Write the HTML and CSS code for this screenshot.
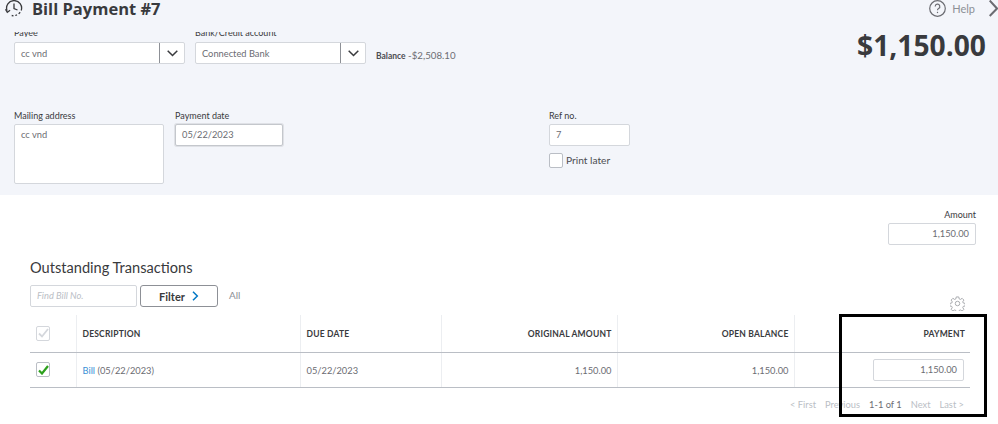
FILE: index.html
```html
<!DOCTYPE html>
<html lang="en">
<head>
<meta charset="utf-8">
<title>Bill Payment #7</title>
<link rel="stylesheet" href="styles.css">
</head>
<body>
<div class="page">
  <header class="panel">
    <div class="title-row">
      <svg class="history" width="18" height="17" viewBox="0 0 18 17" fill="none" stroke="#393a3d" stroke-width="1.300">
        <path d="M2.100 10.800A7.500 7.500 0 1 1 16.200 10.500"/>
        <path d="M15.200 12.200l-1.500 1.700M12 14.900l-1.700.6M8.500 15.800l-1.800-.3"/>
        <path d="M9 3.500V8.500l3.500 1.500"/>
        <path d="M.5 9.300l1.800 3 2.800-2"/>
      </svg>
      <h1 class="title">Bill Payment #7</h1>
      <div class="help">
        <svg width="17" height="17" viewBox="0 0 17 17" fill="none" stroke="#6b6c72" stroke-width="1.200">
          <circle cx="8.500" cy="8.500" r="7.800"/>
          <path d="M6.200 6.500a2.300 2.300 0 1 1 3.400 2c-.8.500-1.100.9-1.100 1.700"/>
          <path d="M8.500 11.800v1.300"/>
        </svg>
        <span>Help</span>
      </div>
      <svg class="close" width="9" height="17" viewBox="0 0 9 17" fill="none" stroke="#6b6c72" stroke-width="2">
        <path d="M0.700 0.500L8 8.500L0.700 16"/>
      </svg>
    </div>

    <div class="top-row">
      <div class="field payee">
        <label class="clipped">Payee</label>
        <div class="combo"><span>cc vnd</span><i class="combo-btn"><svg width="11" height="7" viewBox="0 0 11 7" fill="none" stroke="#393a3d" stroke-width="1.500"><path d="M.700.700l4.800 4.800L10.300.700"/></svg></i></div>
      </div>
      <div class="field bank">
        <label class="clipped">Bank/Credit account</label>
        <div class="combo"><span>Connected Bank</span><i class="combo-btn"><svg width="11" height="7" viewBox="0 0 11 7" fill="none" stroke="#393a3d" stroke-width="1.500"><path d="M.700.700l4.800 4.800L10.300.700"/></svg></i></div>
      </div>
      <div class="balance"><b>Balance</b> -$2,508.10</div>
      <div class="total">$1,150.00</div>
    </div>

    <div class="second-row">
      <div class="field mailing">
        <label>Mailing address</label>
        <div class="box area">cc vnd</div>
      </div>
      <div class="field date">
        <label>Payment date</label>
        <div class="box focus">05/22/2023</div>
      </div>
      <div class="field ref">
        <label>Ref no.</label>
        <div class="box">7</div>
        <div class="print"><span class="check"></span><span class="print-text">Print later</span></div>
      </div>
    </div>
  </header>

  <main class="content">
    <div class="amount">
      <label>Amount</label>
      <div class="box num">1,150.00</div>
    </div>
    <h2 class="section">Outstanding Transactions</h2>
    <div class="tools">
      <div class="box find">Find Bill No.</div>
      <button class="filter">Filter <svg width="7" height="10" viewBox="0 0 7 10" fill="none" stroke="#0077c5" stroke-width="1.500"><path d="M1 .8L5.300 5 1 9.200"/></svg></button>
      <span class="all">All</span>
      <svg class="gear" width="15" height="15" viewBox="0 0 24 24" fill="none" stroke="#a4a6ab" stroke-width="1.500">
        <circle cx="12" cy="12" r="3.600"/>
        <path d="M10 1.500h4l.7 3.200 1.900.8 2.800-1.800 2.800 2.800-1.800 2.800.8 1.900 3.200.7v4l-3.200.7-.8 1.900 1.800 2.800-2.800 2.800-2.800-1.800-1.900.8-.7 3.200h-4l-.7-3.200-1.900-.8-2.800 1.800-2.800-2.800 1.800-2.800-.8-1.900-3.200-.7v-4l3.200-.7.8-1.900-1.800-2.800 2.800-2.800 2.800 1.800 1.900-.8z"/>
      </svg>
    </div>
    <table class="grid">
      <colgroup><col class="c1"><col class="c2"><col class="c3"><col class="c4"><col class="c5"><col class="c6"></colgroup>
      <thead>
        <tr>
          <th class="chk"><span class="check faded"><svg width="11" height="10" viewBox="0 0 11 10" fill="none" stroke="#d4d7dc" stroke-width="1.800"><path d="M1 5.500l3 3L10 1"/></svg></span></th>
          <th>DESCRIPTION</th>
          <th>DUE DATE</th>
          <th class="r">ORIGINAL AMOUNT</th>
          <th class="r">OPEN BALANCE</th>
          <th class="r last">PAYMENT</th>
        </tr>
      </thead>
      <tbody>
        <tr>
          <td class="chk"><span class="check"><svg width="11" height="10" viewBox="0 0 11 10" fill="none" stroke="#2ca01c" stroke-width="2.200"><path d="M1 5.500l3 3L10 1"/></svg></span></td>
          <td><a class="link">Bill</a> (05/22/2023)</td>
          <td>05/22/2023</td>
          <td class="r">1,150.00</td>
          <td class="r">1,150.00</td>
          <td class="r last"><div class="box num pay">1,150.00</div></td>
        </tr>
      </tbody>
    </table>
    <nav class="pager">
      <span>&lt; First</span><span>Previous</span><span class="cur">1-1 of 1</span><span>Next</span><span>Last &gt;</span>
    </nav>
  </main>
  <div class="highlight"></div>
</div>
</body>
</html>
```

FILE: styles.css
```css
* { box-sizing: border-box; }
html, body { margin: 0; height: 100%; }
body { background: #fff; font-family: "Lato", "Liberation Sans", sans-serif; font-size: 9.300px; color: #6b6c72; overflow: hidden; }
.page { position: relative; width: 998px; height: 424px; overflow: hidden; }

.panel { height: 195px; background: #f3f5fa; padding: 0 0 0 14px; }
.title-row { display: flex; align-items: center; height: 17px; }
.history { margin-left: -9px; margin-right: 9px; flex: none; }
.title { margin: 0; font: 700 16.500px/17px "Open Sans", sans-serif; color: #393a3d; }
.help { margin-left: auto; display: flex; align-items: center; gap: 6px; font-size: 11px; color: #8d9096; }
.close { margin-left: 14px; margin-right: 0; flex: none; }

.top-row { display: flex; margin-top: 15px; align-items: flex-start; }
.field label { display: block; font-size: 9px; line-height: 12px; height: 12px; color: #393a3d; margin-bottom: 2px; }
.field label.clipped { height: 5px; margin-bottom: 5px; overflow: hidden; line-height: 1px; }
.payee { width: 171px; margin-right: 10px; }
.bank { width: 171px; margin-right: 10px; }
.combo { display: flex; align-items: center; height: 22px; background: #fff; border: 1px solid #d4d7dc; border-radius: 2px; padding-left: 6px; }
.combo span { flex: 1; }
.combo-btn { display: flex; align-items: center; justify-content: center; width: 25px; height: 100%; border-left: 1px solid #8d9096; }
.balance { margin-top: 17px; font-size: 9.700px; white-space: nowrap; }
.balance b { font-weight: 700; font-size: 8.500px; color: #4c4d52; }
.total { margin-left: auto; margin-right: 12px; margin-top: -3px; font: 700 28.200px/32px "Open Sans", sans-serif; color: #393a3d; }

.second-row { display: flex; margin-top: 46px; }
.mailing { width: 150px; margin-right: 11px; }
.date { width: 108px; margin-right: 266px; }
.ref { width: 81px; }
.box { height: 22px; line-height: 20px; background: #fff; border: 1px solid #d4d7dc; border-radius: 2px; padding: 0 6px; white-space: nowrap; }
.area { height: 60px; }
.focus { border-color: #c4c7cc; box-shadow: 0 0 0 1px #dfe1e6; }
.print { display: flex; align-items: center; gap: 3px; margin-top: 7px; font-size: 10.200px; color: #4c4d52; }
.print-text { margin-top: -2px; }
.check { display: flex; align-items: center; justify-content: center; width: 14px; height: 15px; background: #fff; border: 1px solid #babec5; border-radius: 2px; flex: none; }

.content { padding: 14px 28px 0 30px; }
.amount { width: 88px; margin-left: auto; margin-right: -6px; text-align: right; }
.amount label { display: block; font-size: 9px; line-height: 12px; color: #393a3d; margin-bottom: 2px; }
.num { text-align: right; }
.section { margin: 14px 0 8px; font: 400 14.600px/18px "Lato", sans-serif; color: #393a3d; }
.tools { display: flex; align-items: center; height: 22px; position: relative; }
.find { width: 107px; font-style: italic; color: #babec5; }
.filter { width: 78px; height: 22px; margin-left: 3px; display: flex; align-items: center; justify-content: center; gap: 7px; background: #fff; border: 1px solid #8d9096; border-radius: 3px; font: 700 11px "Lato", sans-serif; color: #393a3d; padding: 0; }
.all { margin-left: 11px; margin-top: -3px; font-size: 10px; color: #8d9096; }
.gear { margin-left: auto; margin-right: 5px; margin-top: 15px; }

.grid { width: 940px; margin-top: 8px; border-collapse: collapse; table-layout: fixed; }
.c1 { width: 46px; } .c2 { width: 224px; } .c3 { width: 141px; } .c4 { width: 176px; } .c5 { width: 177px; } .c6 { width: 176px; }
.grid th { height: 37px; padding: 2px 5px 0 6px; font-size: 8.500px; font-weight: 700; letter-spacing: .2px; text-align: left; color: #393a3d; border-right: 1px solid #eceef1; border-bottom: 1px solid #babec5; }
.grid td { height: 35px; padding: 1px 5px 0 6px; border-right: 1px solid #eceef1; border-bottom: 1px solid #babec5; }
.grid th:last-child, .grid td:last-child { border-right: 0; }
.grid .r { text-align: right; }
.grid td.last { padding-right: 6px; }
.grid .chk { padding: 0 0 0 6px; }
.faded { border-color: #d4d7dc; }
.link { color: #3a91d6; }
.pay { width: 91px; margin-left: auto; }
.pager { display: flex; justify-content: flex-end; gap: 9px; margin-top: 11px; padding-right: 6px; font-size: 9.300px; line-height: 12px; color: #babec5; }
.pager .cur { color: #6b6c72; }

.highlight { position: absolute; left: 839px; top: 314px; width: 148px; height: 103px; border: 3px solid #000; pointer-events: none; }
```
